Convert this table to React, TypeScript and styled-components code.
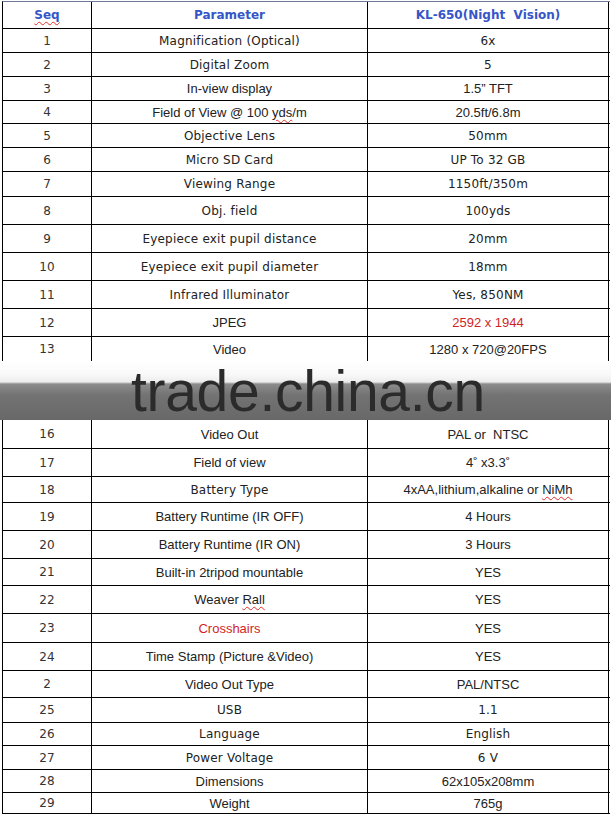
import styled, { createGlobalStyle } from "styled-components";

type Face = "tahoma" | "arial";

interface Spec {
	seq: string;
	param: string;
	value: string;
	h: number;
	face?: Face;
	paramRed?: boolean;
	valueRed?: boolean;
	paramTypo?: [string, string, string];
	valueTypo?: [string, string, string];
}

const topRows: Spec[] = [
	{ seq: "1", param: "Magnification (Optical)", value: "6x", h: 24, face: "tahoma" },
	{ seq: "2", param: "Digital Zoom", value: "5", h: 24, face: "tahoma" },
	{ seq: "3", param: "In-view display", value: "1.5\u201d TFT", h: 24 },
	{ seq: "4", param: "", value: "20.5ft/6.8m", h: 23, paramTypo: ["Field of View @ 100 ", "yds", "/m"] },
	{ seq: "5", param: "Objective Lens", value: "50mm", h: 24, face: "tahoma" },
	{ seq: "6", param: "Micro SD Card", value: "UP To 32 GB", h: 24, face: "tahoma" },
	{ seq: "7", param: "Viewing Range", value: "1150ft/350m", h: 25, face: "tahoma" },
	{ seq: "8", param: "Obj. field", value: "100yds", h: 28, face: "tahoma" },
	{ seq: "9", param: "Eyepiece exit pupil distance", value: "20mm", h: 28, face: "tahoma" },
	{ seq: "10", param: "Eyepiece exit pupil diameter", value: "18mm", h: 28, face: "tahoma" },
	{ seq: "11", param: "Infrared Illuminator", value: "Yes, 850NM", h: 28, face: "tahoma" },
	{ seq: "12", param: "JPEG", value: "2592 x 1944", h: 28, valueRed: true },
];

const bottomRows: Spec[] = [
	{ seq: "16", param: "Video Out", value: "PAL or  NTSC", h: 29 },
	{ seq: "17", param: "Field of view", value: "4\u02da x3.3\u02da", h: 28 },
	{ seq: "18", param: "Battery Type", value: "", h: 26, face: "tahoma", valueTypo: ["4xAA,lithium,alkaline or ", "NiMh", ""] },
	{ seq: "19", param: "Battery Runtime (IR OFF)", value: "4 Hours", h: 28 },
	{ seq: "20", param: "Battery Runtime (IR ON)", value: "3 Hours", h: 28 },
	{ seq: "21", param: "Built-in 2tripod mountable", value: "YES", h: 27 },
	{ seq: "22", param: "", value: "YES", h: 28, paramTypo: ["Weaver ", "Rall", ""] },
	{ seq: "23", param: "Crosshairs", value: "YES", h: 29, paramRed: true },
	{ seq: "24", param: "Time Stamp (Picture &Video)", value: "YES", h: 28 },
	{ seq: "2", param: "Video Out Type", value: "PAL/NTSC", h: 27 },
	{ seq: "25", param: "USB", value: "1.1", h: 25, face: "tahoma" },
	{ seq: "26", param: "Language", value: "English", h: 23, face: "tahoma" },
	{ seq: "27", param: "Power Voltage", value: "6 V", h: 24, face: "tahoma" },
	{ seq: "28", param: "Dimensions", value: "62x105x208mm", h: 23 },
	{ seq: "29", param: "Weight", value: "765g", h: 21 },
];

const GlobalStyle = createGlobalStyle`
	body {
		margin: 0;
		background: #ffffff;
	}
`;

const Page = styled.div`
	width: 611px;
	height: 815px;
	overflow: hidden;
	padding: 1px 0 0 2px;
	box-sizing: border-box;
	background: #ffffff;
`;

const Sheet = styled.div`
	width: 607px;
	border-left: 1px solid #000;
	border-top: 1px solid #6d7a9a;
`;

const Row = styled.div<{ $h: number; $open?: boolean }>`
	display: grid;
	grid-template-columns: 89px 276px 241px;
	height: ${(p) => p.$h}px;
	border-bottom: ${(p) => (p.$open ? "none" : "1px solid #000")};
	box-sizing: border-box;
`;

const Cell = styled.div<{ $face?: Face; $red?: boolean }>`
	display: flex;
	align-items: center;
	justify-content: center;
	border-right: 1px solid #000;
	font-family: ${(p) =>
		p.$face === "tahoma"
			? '"DejaVu Sans", Verdana, sans-serif'
			: '"Liberation Sans", Arial, sans-serif'};
	font-size: ${(p) => (p.$face === "tahoma" ? "12px" : "13px")};
	letter-spacing: ${(p) => (p.$face === "tahoma" ? "0.2px" : "0")};
	color: ${(p) => (p.$red ? "#d21f26" : "#222")};
	white-space: pre;
`;

const SeqCell = styled(Cell)`
	font-family: "DejaVu Sans", Verdana, sans-serif;
	font-size: 12px;
	color: #333;
`;

const HeadCell = styled.div`
	display: flex;
	align-items: center;
	justify-content: center;
	border-right: 1px solid #000;
	font-family: "DejaVu Sans", Verdana, sans-serif;
	font-weight: bold;
	font-size: 12px;
	color: #3656c8;
	white-space: pre;
`;

const Typo = styled.span`
	text-decoration: underline wavy #e0302a;
	text-decoration-thickness: 1px;
	text-underline-offset: 2px;
`;

const Watermark = styled.div`
	position: relative;
	height: 59px;
	margin-left: -3px;
	width: 611px;
	background: linear-gradient(
		to bottom,
		#ffffff 0px,
		#f8f8f8 14px,
		#ececec 21px,
		#8c8c8c 23px,
		#737373 34px,
		#686868 59px
	);
`;

const Brand = styled.div`
	position: absolute;
	left: 131px;
	top: 8px;
	font-family: "Liberation Sans", Arial, sans-serif;
	font-size: 57px;
	line-height: 44px;
	color: #2b2b2b;
	letter-spacing: -0.3px;
`;

const withTypo = (t?: [string, string, string]) =>
	t ? (
		<>
			{t[0]}
			<Typo>{t[1]}</Typo>
			{t[2]}
		</>
	) : null;

const SpecRow = ({ r, open }: { r: Spec; open?: boolean }) => (
	<Row $h={r.h} $open={open}>
		<SeqCell>{r.seq}</SeqCell>
		<Cell $face={r.face} $red={r.paramRed}>
			{r.paramTypo ? withTypo(r.paramTypo) : r.param}
		</Cell>
		<Cell $face={r.valueTypo ? "arial" : r.face} $red={r.valueRed}>
			{r.valueTypo ? withTypo(r.valueTypo) : r.value}
		</Cell>
	</Row>
);

const App = () => {
	return (
		<Page>
			<GlobalStyle />
			<Sheet>
				<Row $h={27}>
					<HeadCell>
						<Typo>Seq</Typo>
					</HeadCell>
					<HeadCell>Parameter</HeadCell>
					<HeadCell>KL-650(Night  Vision)</HeadCell>
				</Row>
				{topRows.map((r) => (
					<SpecRow key={r.seq + r.param} r={r} />
				))}
				<SpecRow
					r={{ seq: "13", param: "Video", value: "1280 x 720@20FPS", h: 24 }}
					open
				/>
				<Watermark>
					<Brand>trade.china.cn</Brand>
				</Watermark>
				{bottomRows.map((r) => (
					<SpecRow key={r.seq + r.param} r={r} />
				))}
			</Sheet>
		</Page>
	);
};

export default App;
